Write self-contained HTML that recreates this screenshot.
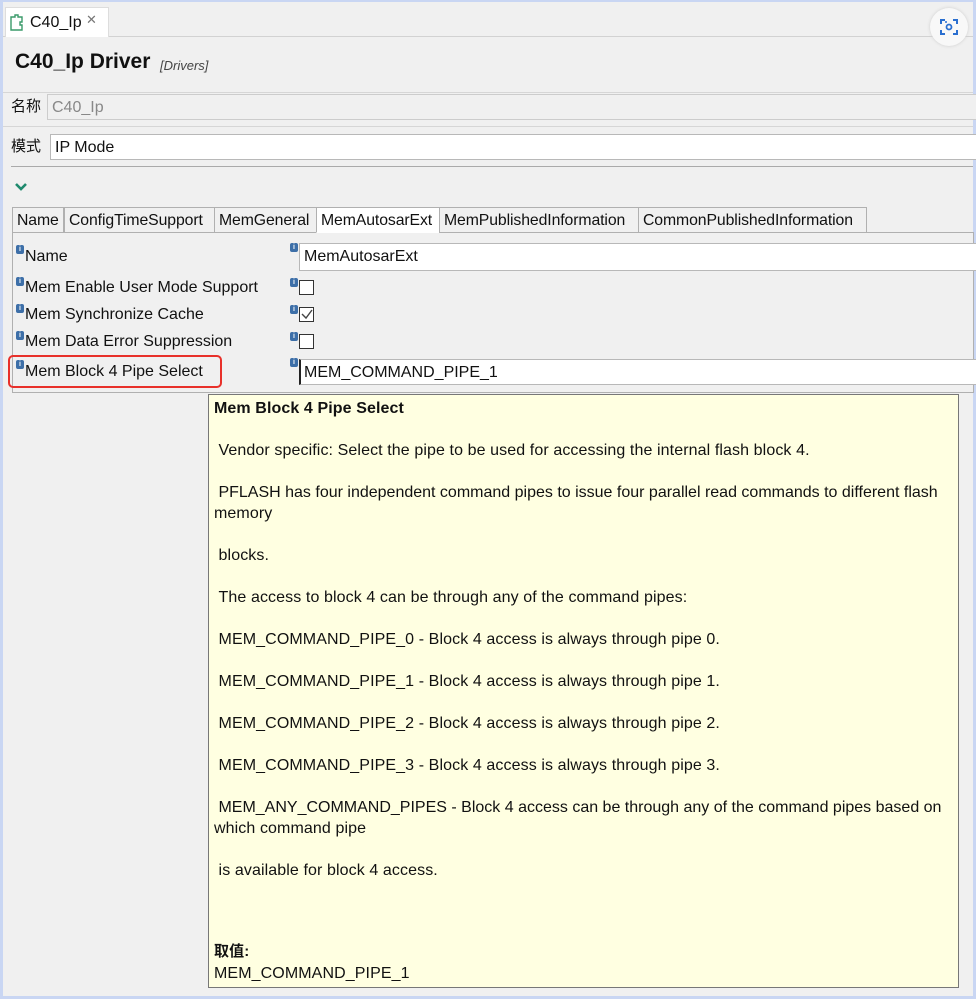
<!DOCTYPE html>
<html><head><meta charset="utf-8"><style>
*{margin:0;padding:0;box-sizing:border-box}
body{width:976px;height:999px;overflow:hidden;background:#f0f0f0;font-family:"Liberation Sans","Noto Sans CJK SC",sans-serif;font-size:16px;color:#111;position:relative}
.a{position:absolute;white-space:nowrap}
.frame{position:absolute;left:0;top:0;width:976px;height:999px;border:3px solid #c9d6f3;border-top-width:2px}
.in{position:absolute;border:1px solid #b8b8b8;background:#fff;height:26px;padding:3px 4px;line-height:19px}
.tab{position:absolute;top:207px;height:26px;border:1px solid #b0b0b0;background:#f0f0f0;padding:4px 4px;line-height:18px;white-space:nowrap;font-size:15.8px;letter-spacing:-0.1px}
.ico{position:absolute;width:8px;height:9px;background:#3d6fa8;border-radius:2px;color:#fff;font-size:7px;line-height:9px;text-align:center;font-weight:bold}
.cb{position:absolute;width:15px;height:15px;border:1px solid #333;background:#fff}
.tt{position:absolute;left:208px;top:394px;width:751px;height:594px;background:#ffffe1;border:1px solid #777}
.tt div{position:absolute;white-space:nowrap;font-size:16px;line-height:19px;letter-spacing:0.1px}
</style></head><body>
<div class="frame"></div>
<div class="a" style="left:3px;top:2px;width:970px;height:35px;border-bottom:1px solid #d2d2d2"></div>
<div class="a" style="left:5px;top:7px;width:104px;height:30px;background:#fff;border:1px solid #ddd;border-bottom:none"></div>
<svg class="a" style="left:9px;top:13px" width="16" height="18" viewBox="0 0 16 18"><path d="M2 4h4V2h3v2h4v5h-2v3h2v5H2z" fill="none" stroke="#3a9a6a" stroke-width="1.4"/></svg>
<div class="a" style="left:30px;top:14px;font-size:16px">C40_Ip</div>
<div class="a" style="left:86px;top:12px;font-size:13px;color:#777">✕</div>
<div class="a" style="left:930px;top:8px;width:38px;height:38px;border-radius:50%;background:#f8f8f8;box-shadow:0 0 3px #ccc"></div>
<svg class="a" style="left:938px;top:16px" width="22" height="22" viewBox="0 0 22 22"><path d="M3 8V4h4M15 4h4v4M19 14v4h-4M7 18H3v-4" fill="none" stroke="#2a6fd0" stroke-width="2"/><circle cx="11" cy="11" r="2.5" fill="none" stroke="#2a6fd0" stroke-width="1.8"/><circle cx="8" cy="6" r="1" fill="#2a6fd0"/></svg>
<div class="a" style="left:15px;top:50px;font-size:21px;font-weight:bold">C40_Ip Driver</div>
<div class="a" style="left:160px;top:58px;font-size:13px;font-style:italic;color:#444">[Drivers]</div>
<div class="a" style="left:3px;top:92px;width:970px;border-top:1px solid #d6d6d6"></div>
<div class="a" style="left:11px;top:97px;font-size:15px;line-height:20px">名称</div>
<div class="in" style="left:47px;top:94px;width:930px;background:#f0f0f0;color:#888;border-color:#ccc">C40_Ip</div>
<div class="a" style="left:3px;top:126px;width:970px;border-top:1px solid #d6d6d6"></div>
<div class="a" style="left:11px;top:137px;font-size:15px;line-height:20px">模式</div>
<div class="in" style="left:50px;top:134px;width:928px">IP Mode</div>
<div class="a" style="left:11px;top:166px;width:962px;border-top:1px solid #aaa"></div>
<svg class="a" style="left:14px;top:182px" width="14" height="10" viewBox="0 0 14 10"><path d="M2 2l5 5 5-5" fill="none" stroke="#1f8a6e" stroke-width="2.6"/></svg>
<div class="a" style="left:12px;top:232px;width:962px;height:161px;border:1px solid #b0b0b0;background:#f0f0f0"></div>
<div class="tab" style="left:12px;width:52px">Name</div>
<div class="tab" style="left:64px;width:151px">ConfigTimeSupport</div>
<div class="tab" style="left:214px;width:103px">MemGeneral</div>
<div class="tab" style="left:316px;width:124px;background:#fff;border-bottom-color:#fff">MemAutosarExt</div>
<div class="tab" style="left:439px;width:200px">MemPublishedInformation</div>
<div class="tab" style="left:638px;width:229px">CommonPublishedInformation</div>
<div class="ico" style="left:16px;top:245px">i</div><div class="a" style="left:25px;top:248px">Name</div>
<div class="ico" style="left:16px;top:277px">i</div><div class="a" style="left:25px;top:279px">Mem Enable User Mode Support</div>
<div class="ico" style="left:16px;top:304px">i</div><div class="a" style="left:25px;top:306px">Mem Synchronize Cache</div>
<div class="ico" style="left:16px;top:331px">i</div><div class="a" style="left:25px;top:333px">Mem Data Error Suppression</div>
<div class="ico" style="left:16px;top:360px">i</div><div class="a" style="left:25px;top:363px">Mem Block 4 Pipe Select</div>
<div class="a" style="left:8px;top:355px;width:214px;height:33px;border:2.5px solid #e8302a;border-radius:5px"></div>
<div class="ico" style="left:290px;top:243px">i</div>
<div class="in" style="left:299px;top:243px;width:680px;height:28px">MemAutosarExt</div>
<div class="ico" style="left:290px;top:278px">i</div><div class="cb" style="left:299px;top:280px"></div>
<div class="ico" style="left:290px;top:305px">i</div><div class="cb" style="left:299px;top:307px"></div>
<svg class="a" style="left:301px;top:309px" width="12" height="11"><path d="M1 5l4 4 6-8" fill="none" stroke="#444" stroke-width="1.4"/></svg>
<div class="ico" style="left:290px;top:332px">i</div><div class="cb" style="left:299px;top:334px"></div>
<div class="ico" style="left:290px;top:358px">i</div>
<div class="in" style="left:299px;top:359px;width:680px;height:26px;padding-left:3px;border-left:2px solid #222">MEM_COMMAND_PIPE_1</div>
<div class="tt">
<div style="left:5px;top:4px;font-weight:bold">Mem Block 4 Pipe Select</div>
<div style="left:5px;top:46px">&nbsp;Vendor specific: Select the pipe to be used for accessing the internal flash block 4.</div>
<div style="left:5px;top:88px;letter-spacing:0">&nbsp;PFLASH has four independent command pipes to issue four parallel read commands to different flash</div>
<div style="left:5px;top:109px">memory</div>
<div style="left:5px;top:151px">&nbsp;blocks.</div>
<div style="left:5px;top:193px">&nbsp;The access to block 4 can be through any of the command pipes:</div>
<div style="left:5px;top:235px">&nbsp;MEM_COMMAND_PIPE_0 - Block 4 access is always through pipe 0.</div>
<div style="left:5px;top:277px">&nbsp;MEM_COMMAND_PIPE_1 - Block 4 access is always through pipe 1.</div>
<div style="left:5px;top:319px">&nbsp;MEM_COMMAND_PIPE_2 - Block 4 access is always through pipe 2.</div>
<div style="left:5px;top:361px">&nbsp;MEM_COMMAND_PIPE_3 - Block 4 access is always through pipe 3.</div>
<div style="left:5px;top:403px;letter-spacing:0">&nbsp;MEM_ANY_COMMAND_PIPES - Block 4 access can be through any of the command pipes based on</div>
<div style="left:5px;top:424px">which command pipe</div>
<div style="left:5px;top:466px">&nbsp;is available for block 4 access.</div>
<div style="left:5px;top:548px;font-weight:bold;font-size:15px;line-height:18px">取值:</div>
<div style="left:5px;top:569px">MEM_COMMAND_PIPE_1</div>
</div>
</body></html>
